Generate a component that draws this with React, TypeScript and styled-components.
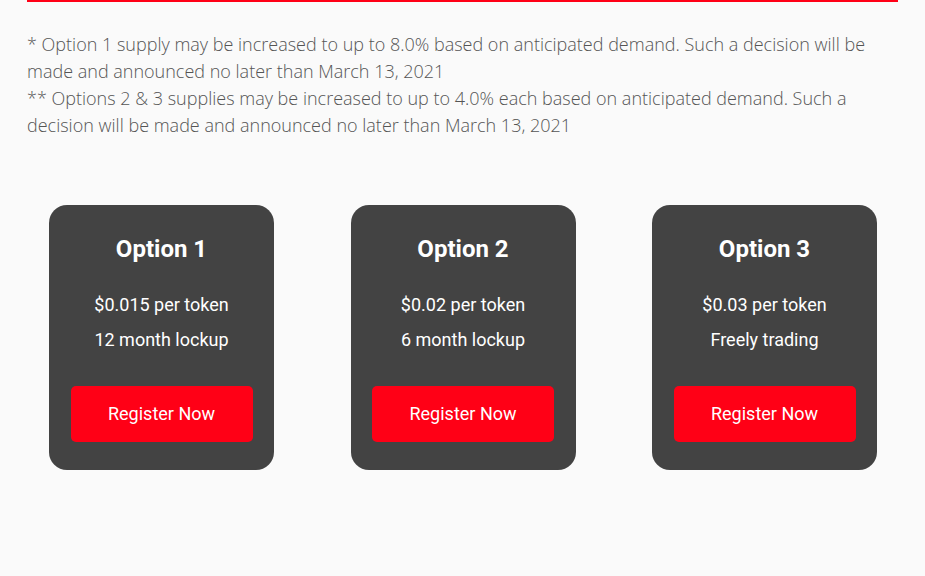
import React from 'react';
import styled, { createGlobalStyle } from 'styled-components';

interface PlanOption {
  title: string;
  price: string;
  term: string;
}

const options: PlanOption[] = [
  { title: 'Option 1', price: '$0.015 per token', term: '12 month lockup' },
  { title: 'Option 2', price: '$0.02 per token', term: '6 month lockup' },
  { title: 'Option 3', price: '$0.03 per token', term: 'Freely trading' },
];

const GlobalStyle = createGlobalStyle`
  html, body {
    margin: 0;
    padding: 0;
    background: #fafafa;
  }
  body {
    font-family: Roboto, "Liberation Sans", sans-serif;
  }
`;

const StyledPage = styled.div`
  width: 871px;
  margin: 0 auto 0 27px;
`;

const StyledDivider = styled.div`
  height: 2px;
  background: #ff0016;
`;

const StyledNotes = styled.div`
  margin-top: 29px;
  font-family: "Open Sans", Roboto, sans-serif;
  font-size: 18px;
  line-height: 27px;
  font-weight: 300;
  color: #555555;
`;

const StyledCardRow = styled.div`
  display: flex;
  justify-content: space-between;
  padding: 0 21px 0 22px;
  margin-top: 66px;
`;

const StyledCard = styled.div`
  width: 225px;
  height: 265px;
  box-sizing: border-box;
  padding: 28px 21px 0;
  border-radius: 18px;
  background: #434343;
  color: #ffffff;
  display: flex;
  flex-direction: column;
  align-items: center;
`;

const StyledTitle = styled.div`
  font-size: 24px;
  font-weight: 700;
  line-height: 32px;
`;

const StyledDetail = styled.div<{ $gap: number }>`
  margin-top: ${({ $gap }) => $gap}px;
  font-size: 18px;
  font-weight: 400;
  line-height: 24px;
`;

const StyledButton = styled.button`
  margin-top: 34px;
  width: 182px;
  height: 56px;
  border: none;
  border-radius: 5px;
  background: #ff0016;
  color: #ffffff;
  font-family: inherit;
  font-size: 18px;
  font-weight: 400;
  padding-bottom: 2px;
  cursor: pointer;
`;

export default function App() {
  return (
    <StyledPage>
      <GlobalStyle />
      <StyledDivider />
      <StyledNotes>
        * Option 1 supply may be increased to up to 8.0% based on anticipated demand. Such a decision will be
        made and announced no later than March 13, 2021
        <br />
        ** Options 2 &amp; 3 supplies may be increased to up to 4.0% each based on anticipated demand. Such a
        decision will be made and announced no later than March 13, 2021
      </StyledNotes>
      <StyledCardRow>
        {options.map((option) => (
          <StyledCard key={option.title}>
            <StyledTitle>{option.title}</StyledTitle>
            <StyledDetail $gap={28}>{option.price}</StyledDetail>
            <StyledDetail $gap={11}>{option.term}</StyledDetail>
            <StyledButton>Register Now</StyledButton>
          </StyledCard>
        ))}
      </StyledCardRow>
    </StyledPage>
  );
}
